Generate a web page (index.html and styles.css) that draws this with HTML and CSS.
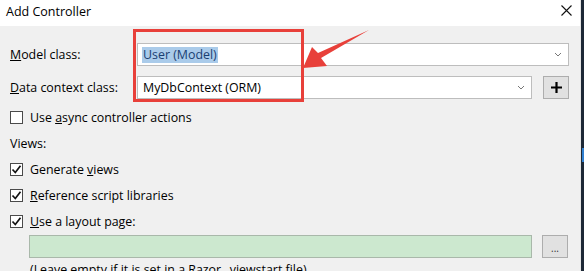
FILE: index.html
```html
<!DOCTYPE html>
<html>
<head>
<meta charset="utf-8">
<link rel="stylesheet" href="styles.css">
</head>
<body>
<div class="screen">
  <div class="dialog">
    <div class="titlebar">
      <span class="title">Add Controller</span>
      <svg class="close" width="11" height="11" viewBox="0 0 11 11"><path d="M0.5 0.5 L10.5 10.5 M10.5 0.5 L0.5 10.5" stroke="#111" stroke-width="1.1" fill="none"/></svg>
    </div>
    <div class="content">
      <div class="form-row">
        <label class="label"><u>M</u>odel class:</label>
        <div class="combo combo-model">
          <span class="selected">User (Model)</span>
          <svg class="chev" width="8" height="5" viewBox="0 0 8 5"><path d="M1 1 L4 4 L7 1" stroke="#777" stroke-width="1" fill="none"/></svg>
        </div>
      </div>
      <div class="form-row row-data">
        <label class="label"><u>D</u>ata context class:</label>
        <div class="combo combo-data">
          <span class="value">MyDbContext (ORM)</span>
          <svg class="chev" width="8" height="5" viewBox="0 0 8 5"><path d="M1 1 L4 4 L7 1" stroke="#777" stroke-width="1" fill="none"/></svg>
        </div>
        <button class="btn btn-plus"><svg width="13" height="13" viewBox="0 0 13 13"><path d="M6.5 1 V12 M1 6.5 H12" stroke="#000" stroke-width="2.2"/></svg></button>
      </div>
      <div class="checks">
        <div class="check-row"><span class="box"></span><span>Use <u>a</u>sync controller actions</span></div>
        <div class="check-row plain"><span>Views:</span></div>
        <div class="check-row"><span class="box"><svg width="11" height="11" viewBox="0 0 11 11"><path d="M1.5 5.5 L4.3 8.5 L9.5 1.8" stroke="#111" stroke-width="1.7" fill="none"/></svg></span><span>Generate <u>v</u>iews</span></div>
        <div class="check-row"><span class="box"><svg width="11" height="11" viewBox="0 0 11 11"><path d="M1.5 5.5 L4.3 8.5 L9.5 1.8" stroke="#111" stroke-width="1.7" fill="none"/></svg></span><span><u>R</u>eference script libraries</span></div>
        <div class="check-row"><span class="box"><svg width="11" height="11" viewBox="0 0 11 11"><path d="M1.5 5.5 L4.3 8.5 L9.5 1.8" stroke="#111" stroke-width="1.7" fill="none"/></svg></span><span><u>U</u>se a layout page:</span></div>
      </div>
      <div class="layout-row">
        <div class="layout-input"></div>
        <button class="btn btn-dots">...</button>
      </div>
      <div class="hint">(Leave empty if it is set in a Razor _viewstart file)</div>
    </div>
    <div class="annot-box"></div>
    <svg class="annot-arrow" width="80" height="50" viewBox="300 25 80 50"><polygon points="303,68 312,47 318,53 369,30 321,58 327,66" fill="#e8403a"/></svg>
  </div>
  <div class="backdrop"><span class="hl"></span></div>
</div>
</body>
</html>
```
FILE: styles.css
```css
html, body {
  margin: 0;
  padding: 0;
}
body {
  font-family: "Open Sans", "Noto Sans", sans-serif;
  font-size: 12.4px;
  color: #000;
  background: #1d2836;
}
.screen {
  display: flex;
  width: 584px;
  height: 271px;
  overflow: hidden;
}
.dialog {
  position: relative;
  width: 580px;
  flex: none;
  display: flex;
  flex-direction: column;
  background: #f0f0f0;
  border-right: 1px solid #e4e4e4;
}
.titlebar {
  height: 26px;
  background: #fff;
  display: flex;
  align-items: center;
  justify-content: space-between;
  padding: 0 8px 0 6px;
  flex: none;
}
.title {
  font-size: 12.5px;
  margin-top: -4px;
}
.close {
  margin-top: -6px;
}
.content {
  padding: 17px 11px 0 10px;
  flex: 1;
}
.form-row {
  display: flex;
  align-items: center;
  height: 23px;
}
.row-data {
  margin-top: 10px;
}
.label {
  width: 127px;
  flex: none;
}
.combo {
  box-sizing: border-box;
  height: 23px;
  background: #fff;
  border: 1px solid #bdbdbd;
  display: flex;
  align-items: center;
  justify-content: space-between;
  padding: 0 6px 0 4px;
}
.combo-model {
  flex: 1;
}
.combo-data {
  width: 395px;
  flex: none;
}
.selected {
  background: #aacbea;
  color: #1a3f72;
  padding: 0 1px;
  line-height: 16px;
}
.value {
  padding-left: 1px;
}
.btn {
  box-sizing: border-box;
  height: 23px;
  width: 26px;
  border: 1px solid #adadad;
  background: #e1e1e1;
  padding: 0;
  display: flex;
  align-items: center;
  justify-content: center;
  font-family: inherit;
}
.btn-plus {
  margin-left: 11px;
}
.checks {
  margin-top: 5px;
}
.check-row {
  height: 26px;
  display: flex;
  align-items: center;
  gap: 7px;
}
.box {
  box-sizing: border-box;
  width: 13px;
  height: 13px;
  border: 1px solid #4a4a4a;
  background: #fff;
  display: flex;
  align-items: center;
  justify-content: center;
  flex: none;
}
.layout-row {
  display: flex;
  align-items: center;
  margin-top: 1px;
  padding-left: 19px;
}
.layout-input {
  box-sizing: border-box;
  width: 503px;
  height: 23px;
  background: #cce8cf;
  border: 1px solid #a9b8aa;
}
.btn-dots {
  margin-left: 10px;
  font-size: 10px;
  color: #333;
  line-height: 1;
  padding-top: 2px;
}
.hint {
  padding-left: 20px;
  margin-top: 3px;
  white-space: nowrap;
}
.annot-box {
  position: absolute;
  left: 133px;
  top: 29px;
  width: 165px;
  height: 67px;
  border: 3px solid #e8403a;
}
.annot-arrow {
  position: absolute;
  left: 300px;
  top: 25px;
}
.backdrop {
  flex: 1;
  background: #1d2836;
  position: relative;
}
.hl {
  position: absolute;
  left: 1px;
  top: 148px;
  width: 2px;
  height: 14px;
  background: #2f7fd0;
}
```
